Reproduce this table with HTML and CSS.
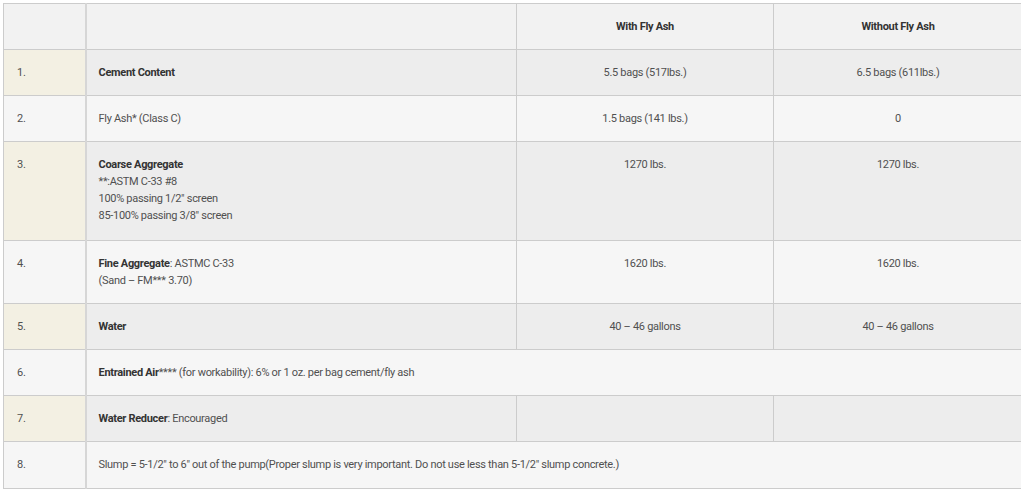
FILE: index.html
```html
<!DOCTYPE html>
<html lang="en">
<head>
  <meta charset="UTF-8">
  <title>Concrete Mix</title>
  <meta name="viewport" content="width=device-width, initial-scale=1.0">
  <link rel="stylesheet" href="styles.css">
</head>

<body>
  <table class="mix-table">
    <colgroup>
      <col class="col-num">
      <col class="col-item">
      <col class="col-with">
      <col class="col-without">
    </colgroup>
    <thead>
      <tr>
        <th class="num"></th>
        <th></th>
        <th>With Fly Ash</th>
        <th>Without Fly Ash</th>
      </tr>
    </thead>
    <tbody>
      <tr class="odd">
        <td class="num">1.</td>
        <td class="item"><strong>Cement Content</strong></td>
        <td>5.5 bags (517lbs.)</td>
        <td>6.5 bags (611lbs.)</td>
      </tr>
      <tr>
        <td class="num">2.</td>
        <td class="item">Fly Ash* (Class C)</td>
        <td>1.5 bags (141 lbs.)</td>
        <td>0</td>
      </tr>
      <tr class="odd tall">
        <td class="num">3.</td>
        <td class="item"><strong>Coarse Aggregate</strong><br>**:ASTM C-33 #8<br>100% passing 1/2" screen<br>85-100% passing 3/8" screen</td>
        <td>1270 lbs.</td>
        <td>1270 lbs.</td>
      </tr>
      <tr>
        <td class="num">4.</td>
        <td class="item"><strong>Fine Aggregate</strong>: ASTMC C-33<br>(Sand – FM*** 3.70)</td>
        <td>1620 lbs.</td>
        <td>1620 lbs.</td>
      </tr>
      <tr class="odd">
        <td class="num">5.</td>
        <td class="item"><strong>Water</strong></td>
        <td>40 – 46 gallons</td>
        <td>40 – 46 gallons</td>
      </tr>
      <tr>
        <td class="num">6.</td>
        <td class="item" colspan="3"><strong>Entrained Air</strong>**** (for workability): 6% or 1 oz. per bag cement/fly ash</td>
      </tr>
      <tr class="odd">
        <td class="num">7.</td>
        <td class="item"><strong>Water Reducer</strong>: Encouraged</td>
        <td></td>
        <td></td>
      </tr>
      <tr class="last">
        <td class="num">8.</td>
        <td class="item" colspan="3">Slump = 5-1/2" to 6" out of the pump(Proper slump is very important. Do not use less than 5-1/2" slump concrete.)</td>
      </tr>
    </tbody>
  </table>
</body>
</html>
```

FILE: styles.css
```css
body {
  margin: 3px 3px;
  background: #ffffff;
  font-family: Roboto, 'Liberation Sans', sans-serif;
  font-size: 11px;
  line-height: 17px;
  color: #505050;
}

.mix-table {
  width: 1019px;
  border-collapse: collapse;
  table-layout: fixed;
  border: 1px solid #cfcfcf;
}

.col-num { width: 82px; }
.col-item { width: 431px; }
.col-with { width: 257px; }
.col-without { width: 249px; }

th,
td {
  border: 1px solid #cccccc;
  padding: 14px 14px;
  vertical-align: top;
  text-align: center;
  letter-spacing: -0.3px;
}

th {
  background: #f2f2f2;
  color: #333333;
  font-weight: 700;
  height: 17px;
}

tbody tr {
  background: #f6f6f6;
}

tbody tr.odd {
  background: #ededed;
}

td.num,
td.item {
  text-align: left;
}

td.num {
  padding-left: 13px;
  border-right: 2px solid #d6d6d6;
}

td.item {
  padding-left: 12px;
}

th.num {
  border-right: 2px solid #d6d6d6;
}

tr.odd td.num {
  background: #f3f0e3;
}

tr.tall td {
  padding-bottom: 16px;
}

tr.last td {
  padding-bottom: 15px;
}

strong {
  color: #333333;
  font-weight: 700;
}
```
